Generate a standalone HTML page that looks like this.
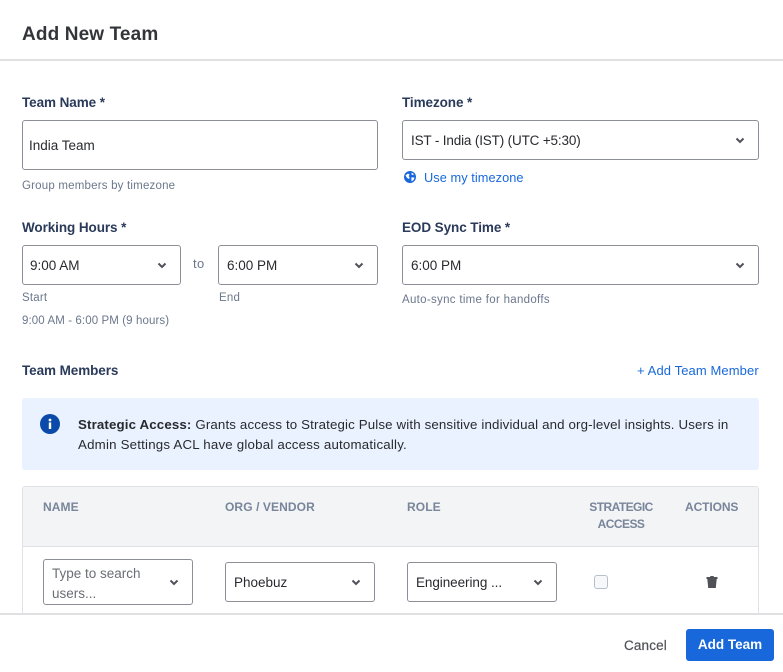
<!DOCTYPE html>
<html><head><meta charset="utf-8">
<style>
html,body{margin:0;padding:0;background:#fff}
body{width:783px;height:672px;position:relative;overflow:hidden;font-family:"Liberation Sans","Noto Sans CJK JP",sans-serif;color:#292a2e}
.t{position:absolute;white-space:nowrap;line-height:20px}
.l{font-size:13.5px;font-weight:700;color:#2a3a5a;letter-spacing:-.08px}
.h{font-size:11.5px;color:#6b778c;letter-spacing:.2px}
.v{font-size:13.5px;color:#292a2e;letter-spacing:0}
.th{font-size:12px;font-weight:700;color:#78859a;letter-spacing:.1px}
.a{font-size:12.8px;color:#1868db;letter-spacing:.05px}
.b{position:absolute;box-sizing:border-box;border:1px solid #8c8f97;border-radius:3px;background:#fff}
svg{position:absolute}
</style></head><body>
<div class="t" style="left:22px;top:22px;margin-top:1px;font-size:19px;line-height:24px;font-weight:700;color:#33353a;letter-spacing:.13px">Add New Team</div>
<div style="position:absolute;left:0;top:59px;width:783px;height:2px;background:#dfe0e1"></div>

<div class="t l" style="left:22px;top:93px">Team Name *</div>
<div class="b" style="left:22px;top:120px;width:356px;height:50px"></div>
<div class="t v" style="left:29px;top:136px">India Team</div>
<div class="t h" style="left:22px;top:176px">Group members by timezone</div>

<div class="t l" style="left:402px;top:93px">Timezone *</div>
<div class="b" style="left:402px;top:120px;width:357px;height:40px"></div>
<div class="t v" style="left:411px;top:131px;letter-spacing:-.16px">IST - India (IST) (UTC +5:30)</div>
<svg style="left:734px;top:134px" width="12" height="12" viewBox="0 0 12 12"><path d="M2.5 4.5L6 8l3.5-3.5" fill="none" stroke="#505258" stroke-width="2"/></svg>
<svg style="left:404px;top:171px" width="12" height="12" viewBox="0 0 12 12"><circle cx="6" cy="6" r="6" fill="#1868db"/><path d="M1.5 4.2L4 2.6l1.6.9-.9 1.6.9 1.4-.5 1.6L2.8 6.6zM7.6 1.7l2.2 1.2-.7 1.3-1.6-.7zM7.4 6.2l3.2.4-1.2 2.6-2 1z" fill="#fff"/></svg>
<div class="t a" style="left:424px;top:168px">Use my timezone</div>

<div class="t l" style="left:22px;top:218px">Working Hours *</div>
<div class="b" style="left:22px;top:245px;width:159px;height:40px"></div>
<div class="t v" style="left:30px;top:256px">9:00 AM</div>
<svg style="left:156px;top:259px" width="12" height="12" viewBox="0 0 12 12"><path d="M2.5 4.5L6 8l3.5-3.5" fill="none" stroke="#505258" stroke-width="2"/></svg>
<div class="t" style="left:193px;top:254px;font-size:13px;color:#6b778c;letter-spacing:.4px">to</div>
<div class="b" style="left:218px;top:245px;width:160px;height:40px"></div>
<div class="t v" style="left:227px;top:256px">6:00 PM</div>
<svg style="left:353px;top:259px" width="12" height="12" viewBox="0 0 12 12"><path d="M2.5 4.5L6 8l3.5-3.5" fill="none" stroke="#505258" stroke-width="2"/></svg>
<div class="t h" style="left:22px;top:288px">Start</div>
<div class="t h" style="left:219px;top:288px">End</div>
<div class="t h" style="left:22px;top:311px;letter-spacing:.1px">9:00 AM - 6:00 PM (9 hours)</div>

<div class="t l" style="left:402px;top:218px">EOD Sync Time *</div>
<div class="b" style="left:402px;top:245px;width:357px;height:40px"></div>
<div class="t v" style="left:411px;top:256px">6:00 PM</div>
<svg style="left:734px;top:259px" width="12" height="12" viewBox="0 0 12 12"><path d="M2.5 4.5L6 8l3.5-3.5" fill="none" stroke="#505258" stroke-width="2"/></svg>
<div class="t h" style="left:402px;top:290px;letter-spacing:.3px">Auto-sync time for handoffs</div>

<div class="t l" style="left:22px;top:361px">Team Members</div>
<div class="t a" style="left:637px;top:361px;font-size:13px;letter-spacing:.1px">+ Add Team Member</div>

<div style="position:absolute;left:22px;top:398px;width:737px;height:72px;background:#e9f2fe;border-radius:3px"></div>
<svg style="left:40px;top:414px" width="20" height="20" viewBox="0 0 20 20"><circle cx="10" cy="10" r="10" fill="#0b4aa8"/><rect x="8.8" y="8.4" width="2.4" height="6.6" fill="#fff"/><circle cx="10" cy="6" r="1.4" fill="#fff"/></svg>
<div class="t" style="left:78px;top:415px;font-size:13.3px;color:#292a2e;letter-spacing:.14px"><b>Strategic Access:</b> Grants access to Strategic Pulse with sensitive individual and org-level insights. Users in</div>
<div class="t" style="left:78px;top:435px;font-size:13.3px;color:#292a2e;letter-spacing:.2px">Admin Settings ACL have global access automatically.</div>

<div style="position:absolute;box-sizing:border-box;left:22px;top:486px;width:737px;height:140px;border:1px solid #dfe1e6;border-radius:3px 3px 0 0"></div>
<div style="position:absolute;left:23px;top:487px;width:735px;height:59px;background:#f3f4f6;border-bottom:1px solid #dfe1e6;box-sizing:content-box;border-radius:3px 3px 0 0"></div>
<div class="t th" style="left:43px;top:497px">NAME</div>
<div class="t th" style="left:225px;top:497px">ORG / VENDOR</div>
<div class="t th" style="left:407px;top:497px">ROLE</div>
<div class="t th" style="left:571px;width:100px;text-align:center;top:497px;line-height:17px;margin-top:2px;letter-spacing:-.55px">STRATEGIC<br>ACCESS</div>
<div class="t th" style="left:685px;top:497px;letter-spacing:-.1px">ACTIONS</div>

<div class="b" style="left:43px;top:559px;width:150px;height:46px"></div>
<div class="t" style="left:52px;top:564px;font-size:13.5px;color:#6b6e76">Type to search</div>
<div class="t" style="left:52px;top:584px;font-size:13.5px;color:#6b6e76">users...</div>
<svg style="left:168px;top:576px" width="12" height="12" viewBox="0 0 12 12"><path d="M2.5 4.5L6 8l3.5-3.5" fill="none" stroke="#505258" stroke-width="2"/></svg>

<div class="b" style="left:225px;top:562px;width:150px;height:40px"></div>
<div class="t v" style="left:234px;top:573px">Phoebuz</div>
<svg style="left:350px;top:576px" width="12" height="12" viewBox="0 0 12 12"><path d="M2.5 4.5L6 8l3.5-3.5" fill="none" stroke="#505258" stroke-width="2"/></svg>

<div class="b" style="left:407px;top:562px;width:150px;height:40px"></div>
<div class="t v" style="left:416px;top:573px;letter-spacing:-.07px">Engineering ...</div>
<svg style="left:532px;top:576px" width="12" height="12" viewBox="0 0 12 12"><path d="M2.5 4.5L6 8l3.5-3.5" fill="none" stroke="#505258" stroke-width="2"/></svg>

<div style="position:absolute;box-sizing:border-box;left:594px;top:575px;width:14px;height:14px;border:1.5px solid #b7bfcc;border-radius:3px;background:#f7f8f9"></div>
<svg style="left:706px;top:575px" width="12" height="14" viewBox="0 0 12 14"><path d="M4.5 1h3l.5 1h3.5v2H.5V2H4zM1.3 4h9.4L9.8 13H2.2z" fill="#505258"/></svg>

<div style="position:absolute;left:0;top:613px;width:783px;height:59px;background:#fff;border-top:2px solid #dfe0e1;box-sizing:border-box"></div>
<div class="t" style="left:624px;top:636px;font-size:13.5px;color:#505258;letter-spacing:.15px;-webkit-text-stroke:.2px #505258">Cancel</div>
<div style="position:absolute;left:686px;top:629px;width:88px;height:32px;background:#1868db;border-radius:3px;color:#fff;font-size:13.5px;font-weight:700;line-height:32px;text-align:center">Add Team</div>
</body></html>
